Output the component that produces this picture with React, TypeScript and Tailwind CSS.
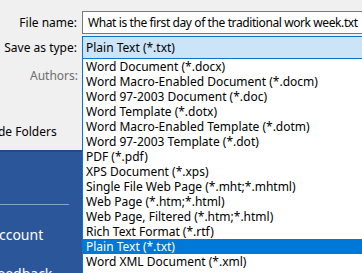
import React from 'react'

const fileTypes = [
  'Word Document (*.docx)',
  'Word Macro-Enabled Document (*.docm)',
  'Word 97-2003 Document (*.doc)',
  'Word Template (*.dotx)',
  'Word Macro-Enabled Template (*.dotm)',
  'Word 97-2003 Template (*.dot)',
  'PDF (*.pdf)',
  'XPS Document (*.xps)',
  'Single File Web Page (*.mht;*.mhtml)',
  'Web Page (*.htm;*.html)',
  'Web Page, Filtered (*.htm;*.html)',
  'Rich Text Format (*.rtf)',
  'Plain Text (*.txt)',
  'Word XML Document (*.xml)',
]

const App: React.FC = () => {
  const selected = 'Plain Text (*.txt)'

  return (
    <div className="relative w-[362px] h-[273px] overflow-hidden bg-[#f0f0f0] text-[12px] text-black font-['Segoe_UI','Noto_Sans',sans-serif]">
      {/* save dialog form */}
      <div className="h-[150px] flex flex-col pt-[11px]">
        <div className="flex items-center h-[23px]">
          <span className="w-[77px] shrink-0 text-right">File name:</span>
          <div className="ml-[5px] h-[23px] w-[300px] shrink-0 flex items-center border border-[#7a7a7a] bg-white pl-[5px] whitespace-nowrap tracking-[-0.4px]">
            What is the first day of the traditional work week.txt
          </div>
        </div>
        <div className="flex items-center h-[23px] mt-[2px]">
          <span className="w-[77px] shrink-0 text-right">Save as type:</span>
          <div className="ml-[5px] h-[23px] w-[300px] shrink-0 flex items-center border border-[#0078d7] bg-[#cce4f7] pl-[3px] whitespace-nowrap">
            {selected}
          </div>
        </div>
        <div className="flex items-center h-[23px] mt-[5px]">
          <span className="w-[78px] shrink-0 text-right text-[#6d6d6d]">Authors:</span>
        </div>
        <div className="flex items-center h-[20px] mt-[35px] overflow-hidden">
          <span className="-ml-[14px] whitespace-nowrap">Hide Folders</span>
        </div>
      </div>

      {/* backstage nav */}
      <div className="h-[123px] bg-[#2b579a] border-t-[2px] border-[#234a84] text-white text-[14px] overflow-hidden">
        <div className="mt-[52px] w-[69px] h-px bg-[#8aa2c8]" />
        <div className="mt-[19px] -ml-[10px] whitespace-nowrap">Account</div>
        <div className="mt-[18px] -ml-[10px] whitespace-nowrap">Feedback</div>
      </div>

      {/* open dropdown list */}
      <div className="absolute left-[82px] top-[59px] w-[290px] h-[220px] bg-white border-l border-[#0078d7]">
        {fileTypes.map(t => (
          <div
            key={t}
            className={`h-[15px] leading-[15px] pl-[3px] whitespace-nowrap ${t === selected ? 'bg-[#0078d7] text-white' : 'text-black'}`}
          >
            {t}
          </div>
        ))}
      </div>
    </div>
  )
}

export default App
